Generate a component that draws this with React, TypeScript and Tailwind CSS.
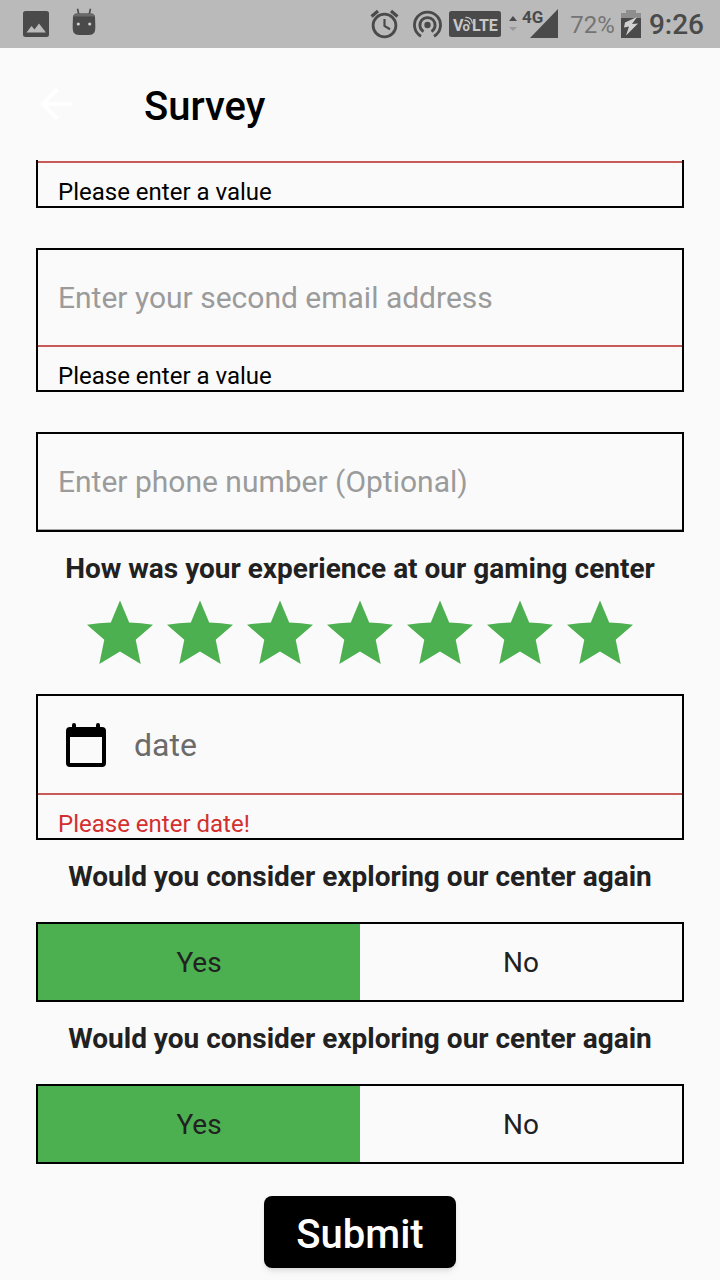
import { useState } from "react";
import type { ReactNode } from "react";

function StatusBar() {
  return (
    <div className="flex h-12 items-center justify-between bg-[#bababa] pr-4 pl-[22px] text-[#4a4a4a]">
      <div className="flex items-center gap-[22px]">
        <svg className="h-7 w-7" viewBox="0 0 28 28" fill="currentColor" aria-hidden="true">
          <path
            fillRule="evenodd"
            d="M3.500 1h21A2.500 2.500 0 0 1 27 3.500v21a2.500 2.500 0 0 1-2.500 2.500h-21A2.500 2.500 0 0 1 1 24.500v-21A2.500 2.500 0 0 1 3.500 1zM4.500 22.500h19.500l-7-9-4.500 6-3-3.500z"
          />
        </svg>
        <svg className="h-8 w-6" viewBox="0 0 24 32" aria-hidden="true">
          <path d="M5.500.8 7 7M18.500.8 17 7" stroke="currentColor" strokeWidth="1.600" />
          <path d="M1 9q.5-3.500 4-3.500h14q3.500 0 4 3.500l.3 8q.2 6.500-1.300 8-1.500 2-5 2H7q-3.500 0-5-2-1.500-1.500-1.300-8z" fill="currentColor" />
          <path d="M4 5.500h16q2 .5 2.500 3h-21q.5-2.500 2.500-3z" fill="#6a6a6a" />
          <circle cx="6.300" cy="16" r="1.600" fill="#cfcfcf" />
          <circle cx="17.700" cy="16" r="1.600" fill="#cfcfcf" />
        </svg>
      </div>
      <div className="flex items-center">
        <svg className="h-[30px] w-[30px]" viewBox="0 0 30 30" fill="none" stroke="currentColor" aria-hidden="true">
          <circle cx="14.500" cy="16.500" r="11.400" strokeWidth="2.800" />
          <path d="m1.500 7.500 6.500-5.500M27.500 7.500 21 2" strokeWidth="3.200" />
          <path d="M14.500 10v7l5.500 3.300" strokeWidth="2.200" />
        </svg>
        <svg className="ml-3 h-[30px] w-[30px]" viewBox="0 0 30 30" fill="none" stroke="currentColor" strokeWidth="2.800" aria-hidden="true">
          <circle cx="15.500" cy="16" r="3.200" fill="currentColor" stroke="none" />
          <path d="M9 27.300a13 13 0 1 1 13 0" />
          <path d="M11.500 22.600a7.600 7.600 0 1 1 8 0" />
        </svg>
        <svg className="ml-[7px] h-[26px] w-[52px]" viewBox="0 0 52 26" aria-hidden="true">
          <rect width="52" height="26" rx="2.500" fill="currentColor" />
          <g fill="#c8c8c8" fontFamily="Roboto, sans-serif" fontWeight="700">
            <text x="4" y="20" fontSize="16">V</text>
            <text x="13.500" y="20" fontSize="13">o</text>
            <text x="23" y="20" fontSize="16">LTE</text>
          </g>
          <path d="M15.500 9.500q4.500-.5 5.500 4M16.500 6.500q6-.5 7 6" fill="none" stroke="#c8c8c8" strokeWidth="1.300" />
        </svg>
        <svg className="ml-2 h-4 w-2" viewBox="0 0 8 16" aria-hidden="true">
          <path d="M4 0 8 5H0z" fill="currentColor" />
          <path d="m4 15 4-4H0z" fill="#999" />
        </svg>
        <svg className="ml-px h-8 w-10" viewBox="0 0 40 32" fill="currentColor" aria-hidden="true">
          <path d="M40 1v29H12z" />
          <text x="4" y="15" fontSize="17" fontWeight="700" fontFamily="Roboto, sans-serif" stroke="#bababa" strokeWidth="2" paintOrder="stroke">4G</text>
        </svg>
        <span className="ml-3 pt-0.5 text-2xl text-[#747474]">72%</span>
        <svg className="ml-1.5 h-[30px] w-5" viewBox="0 0 20 30" aria-hidden="true">
          <path d="M5 1h10v3h5v5H0V4h5z" fill="#8e8e8e" />
          <path d="M0 9h20v20H0z" fill="currentColor" />
          <path d="M16 8 4 13.500l-1 5 5-1-3 9 12-12-6 .5z" fill="#d0d0d0" />
        </svg>
        <span className="ml-2 pt-0.5 text-[28px] font-medium">9:26</span>
      </div>
    </div>
  );
}

function ErrorText({ children }: { children: ReactNode }) {
  return <p className="border-t-2 border-[#c85a5a] px-5 pt-4 pb-px text-2xl leading-[26px]">{children}</p>;
}

function Field({ label, error, type = "text" }: { label: string; error?: string; type?: string }) {
  return (
    <div className="border-2 border-black text-black">
      <input
        type={type}
        aria-label={label}
        placeholder={label}
        className="block h-[95px] w-full bg-transparent px-5 text-3xl outline-none placeholder:text-[#9b9b9b]"
      />
      {error ? <ErrorText>{error}</ErrorText> : <div className="h-px bg-[#a8a8a8]" />}
    </div>
  );
}

function Heading({ children }: { children: ReactNode }) {
  return <h2 className="text-center text-[28px] leading-[34px] font-bold text-[#212121]">{children}</h2>;
}

function Stars() {
  const [rating, setRating] = useState(7);
  return (
    <div className="mt-3.5 flex justify-center">
      {[1, 2, 3, 4, 5, 6, 7].map((n) => (
        <button key={n} type="button" aria-label={`${n} stars`} onClick={() => setRating(n)} className="flex w-20 justify-center">
          <svg viewBox="0 0 66 64" className={n <= rating ? "h-16 w-[66px] text-[#4caf50]" : "h-16 w-[66px] text-gray-300"} fill="currentColor">
            <path d="m33 .5 9.200 22Q54 22.800 66 24.700L48.700 39.800l5 24.200L33 51.500 12.300 64l5-24.200L0 24.700q12-1.900 23.800-2.200z" />
          </svg>
        </button>
      ))}
    </div>
  );
}

function YesNo() {
  const [value, setValue] = useState("Yes");
  return (
    <div className="mt-7 grid grid-cols-2 border-2 border-black text-[28px] text-[#212121]">
      {["Yes", "No"].map((option) => (
        <button
          key={option}
          type="button"
          aria-pressed={value === option}
          onClick={() => setValue(option)}
          className={value === option ? "h-[76px] bg-[#4caf50] pt-0.5" : "h-[76px] pt-0.5"}
        >
          {option}
        </button>
      ))}
    </div>
  );
}

export default function App() {
  return (
    <div className="min-h-screen bg-[#fafafa] font-[Roboto,sans-serif]">
      <StatusBar />
      <header className="flex h-28 items-center gap-16 px-8">
        <button type="button" aria-label="Back" className="text-white">
          <svg className="h-12 w-12" viewBox="0 0 24 24" fill="currentColor" aria-hidden="true">
            <path d="M20 11H7.830l5.590-5.590L12 4l-8 8 8 8 1.410-1.410L7.830 13H20v-2z" />
          </svg>
        </button>
        <h1 className="pt-1.5 text-[40px] leading-[48px] font-medium text-black">Survey</h1>
      </header>
      <form className="px-9 pb-3" onSubmit={(e) => e.preventDefault()}>
        <div className="border-x-2 border-b-2 border-black pt-px text-black">
          <ErrorText>Please enter a value</ErrorText>
        </div>
        <div className="mt-10 flex flex-col gap-10">
          <Field label="Enter your second email address" error="Please enter a value" type="email" />
          <Field label="Enter phone number (Optional)" type="tel" />
        </div>
        <div className="mt-5">
          <Heading>How was your experience at our gaming center</Heading>
          <Stars />
        </div>
        <div className="mt-[30px] border-2 border-black text-[#d32f2f]">
          <label className="flex h-[97px] items-center gap-7 px-7 text-black">
            <svg className="h-11 w-10" viewBox="0 0 40 44" fill="currentColor" aria-hidden="true">
              <path
                fillRule="evenodd"
                d="M6 2a2 2 0 0 1 4 0v2h20V2a2 2 0 0 1 4 0v2h2a4 4 0 0 1 4 4v32a4 4 0 0 1-4 4H4a4 4 0 0 1-4-4V8a4 4 0 0 1 4-4h2zM4 14v26h32V14z"
              />
            </svg>
            <input
              type="text"
              aria-label="date"
              placeholder="date"
              className="min-w-0 flex-1 bg-transparent text-[32px] outline-none placeholder:text-[#6b6b6b]"
            />
          </label>
          <ErrorText>Please enter date!</ErrorText>
        </div>
        <div className="mt-5">
          <Heading>Would you consider exploring our center again</Heading>
          <YesNo />
        </div>
        <div className="mt-5">
          <Heading>Would you consider exploring our center again</Heading>
          <YesNo />
        </div>
        <div className="mt-8 flex justify-center">
          <button type="submit" className="h-[72px] rounded-lg bg-black px-8 pt-1.5 text-[40px] font-medium text-white shadow-md">
            Submit
          </button>
        </div>
      </form>
    </div>
  );
}
